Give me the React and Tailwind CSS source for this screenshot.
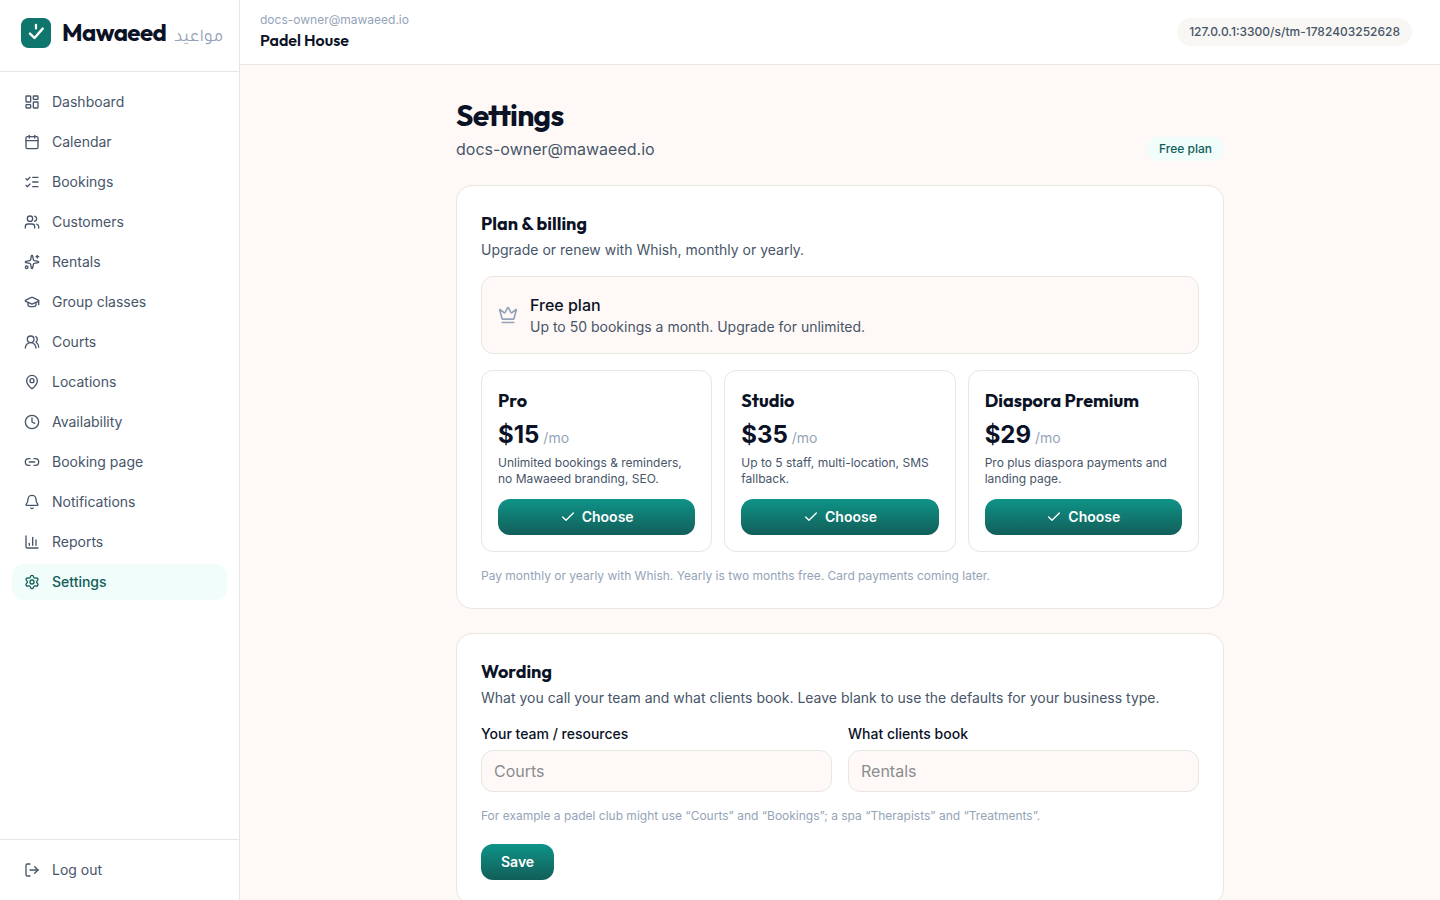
import {
  LayoutDashboard, Calendar, ListChecks, Users, Sparkles, GraduationCap, UsersRound,
  MapPin, Clock, Link2, Bell, ChartColumn, Settings, LogOut, Crown, Check,
} from "lucide-react";

const display = "font-[Outfit,Lato,sans-serif]";

const nav = [
  ["Dashboard", LayoutDashboard],
  ["Calendar", Calendar],
  ["Bookings", ListChecks],
  ["Customers", Users],
  ["Rentals", Sparkles],
  ["Group classes", GraduationCap],
  ["Courts", UsersRound],
  ["Locations", MapPin],
  ["Availability", Clock],
  ["Booking page", Link2],
  ["Notifications", Bell],
  ["Reports", ChartColumn],
  ["Settings", Settings],
];

const plans = [
  { name: "Pro", price: "$15", text: "Unlimited bookings & reminders, no Mawaeed branding, SEO." },
  { name: "Studio", price: "$35", text: "Up to 5 staff, multi-location, SMS fallback." },
  { name: "Diaspora Premium", price: "$29", text: "Pro plus diaspora payments and landing page." },
];

function Logo() {
  return (
    <svg viewBox="0 0 30 30" className="size-[30px] shrink-0" fill="none" stroke="#fff" strokeLinecap="round" strokeLinejoin="round" aria-hidden="true">
      <rect width="30" height="30" rx="7.5" fill="#0f766e" stroke="none" />
      <path d="M15 6.8v3.6" strokeWidth="2.2" />
      <path d="M9 15.6l4.5 4.4 8.2-9.4" strokeWidth="2.4" />
    </svg>
  );
}

function Sidebar() {
  return (
    <aside className="sticky top-0 flex h-screen w-60 shrink-0 flex-col border-r border-[#e7e6e1] bg-white">
      <a href="#home" className="flex h-[72px] shrink-0 items-start border-b border-[#e7e6e1] pt-[18px] pl-[21px]">
        <Logo />
        <span className={`${display} ml-[11px] text-2xl leading-7 font-bold tracking-tight text-[#0b1226]`}>Mawaeed</span>
        <span lang="ar" dir="rtl" className="mt-2 ml-2 font-[Tajawal,Almarai,sans-serif] text-lg leading-6 font-normal text-[#94a3b8]">مواعيد</span>
      </a>
      <nav className="flex flex-1 flex-col gap-1 p-3">
        {nav.map(([label, Icon]) => (
          <a
            key={label}
            href={`#${label}`}
            aria-current={label === "Settings" ? "page" : undefined}
            className={`flex items-center gap-3 rounded-xl px-3 py-2 text-sm ${
              label === "Settings" ? "bg-[#f0fdfa] font-medium text-[#115e59]" : "text-[#475569]"
            }`}
          >
            <Icon className="size-4" />
            {label}
          </a>
        ))}
      </nav>
      <div className="border-t border-[#e7e6e1] p-3">
        <button type="button" className="flex w-full items-center gap-3 rounded-xl px-3 py-2 text-left text-sm text-[#475569]">
          <LogOut className="size-4" />
          Log out
        </button>
      </div>
    </aside>
  );
}

function Card({ title, description, children }) {
  return (
    <section className="mt-6 rounded-2xl border border-[#e7e6e1] bg-white p-6">
      <h2 className={`${display} text-lg leading-7 font-bold`}>{title}</h2>
      <p className="mt-0.5 text-sm text-[#475569]">{description}</p>
      {children}
    </section>
  );
}

function Field({ id, label, placeholder }) {
  return (
    <div>
      <label htmlFor={id} className="block text-sm font-medium">{label}</label>
      <input
        id={id}
        type="text"
        placeholder={placeholder}
        className="mt-1.5 block w-full rounded-xl border border-[#e7e6e1] bg-[#fef9f6] px-3 py-2 text-base placeholder:text-[#8b8c90]"
      />
    </div>
  );
}

export default function App() {
  return (
    <div className="flex min-h-screen bg-[#fef9f6] font-[Inter,sans-serif] text-[#0b1226]">
      <Sidebar />
      <div className="min-w-0 flex-1">
        <header className="flex h-[65px] items-center justify-between border-b border-[#e7e6e1] bg-white pr-7 pl-5">
          <div>
            <p className="text-xs text-[#94a3b8]">docs-owner@mawaeed.io</p>
            <p className={`${display} text-base leading-6 font-semibold`}>Padel House</p>
          </div>
          <a href="#public" className="rounded-full bg-[#f8f7f3] px-3 py-1.5 text-xs font-medium text-[#475569]">
            127.0.0.1:3300/s/tm-1782403252628
          </a>
        </header>
        <main className="mx-auto max-w-3xl py-8">
          <div className="flex items-end justify-between">
            <div>
              <h1 className={`${display} text-3xl leading-9 font-bold tracking-tight`}>Settings</h1>
              <p className="mt-1 text-base text-[#475569]">docs-owner@mawaeed.io</p>
            </div>
            <span className="rounded-full bg-[#f0fdfa] px-3 py-1 text-xs font-medium text-[#115e59]">Free plan</span>
          </div>

          <Card title="Plan & billing" description="Upgrade or renew with Whish, monthly or yearly.">
            <div className="mt-4 flex items-center gap-3 rounded-xl border border-[#e7e6e1] bg-[#fef9f6] p-4">
              <Crown className="size-5 text-[#94a3b8]" />
              <div>
                <p className="text-base font-medium">Free plan</p>
                <p className="text-sm text-[#475569]">Up to 50 bookings a month. Upgrade for unlimited.</p>
              </div>
            </div>
            <div className="mt-4 grid grid-cols-3 gap-3">
              {plans.map((plan) => (
                <article key={plan.name} className="rounded-xl border border-[#e7e6e1] p-4">
                  <h3 className={`${display} text-lg leading-7 font-bold`}>{plan.name}</h3>
                  <p className="mt-1 text-2xl font-bold">
                    {plan.price}
                    <span className="text-sm font-normal text-[#94a3b8]"> /mo</span>
                  </p>
                  <p className="mt-1 text-xs text-[#475569]">{plan.text}</p>
                  <button type="button" className="mt-3 flex w-full items-center justify-center gap-1.5 rounded-xl bg-linear-to-b from-[#0d9488] to-[#115e59] py-2 text-sm font-semibold text-white">
                    <Check className="size-4" />
                    Choose
                  </button>
                </article>
              ))}
            </div>
            <p className="mt-4 text-xs text-[#94a3b8]">Pay monthly or yearly with Whish. Yearly is two months free. Card payments coming later.</p>
          </Card>

          <Card title="Wording" description="What you call your team and what clients book. Leave blank to use the defaults for your business type.">
            <form>
              <div className="mt-4 grid grid-cols-2 gap-4">
                <Field id="team" label="Your team / resources" placeholder="Courts" />
                <Field id="service" label="What clients book" placeholder="Rentals" />
              </div>
              <p className="mt-4 text-xs text-[#94a3b8]">For example a padel club might use “Courts” and “Bookings”; a spa “Therapists” and “Treatments”.</p>
              <button type="button" className="mt-5 rounded-xl bg-linear-to-b from-[#0d9488] to-[#115e59] px-5 py-2 text-sm font-semibold text-white">Save</button>
            </form>
          </Card>
        </main>
      </div>
    </div>
  );
}
